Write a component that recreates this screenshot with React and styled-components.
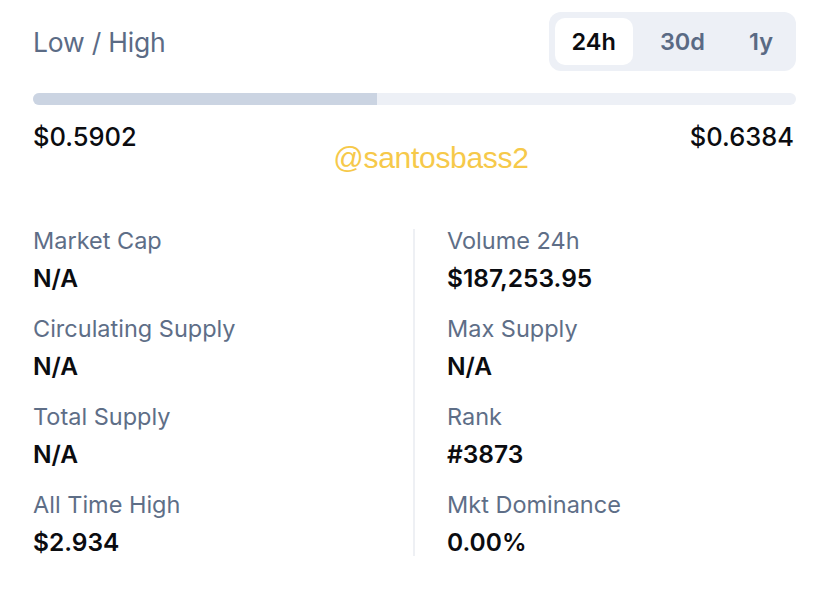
import React from 'react'
import styled, { createGlobalStyle } from 'styled-components'

const GlobalStyle = createGlobalStyle`
  html, body {
    margin: 0;
    padding: 0;
    background: #ffffff;
  }
  body {
    font-family: Inter, "Liberation Sans", sans-serif;
    -webkit-font-smoothing: antialiased;
  }
`

const Page = styled.div`
  position: relative;
  width: 828px;
  height: 599px;
  box-sizing: border-box;
  padding: 12px 32px 0 33px;
  background: #fff;
`

const Header = styled.div`
  display: flex;
  align-items: center;
  justify-content: space-between;
  height: 59px;
`

const Title = styled.div`
  font-size: 26.5px;
  color: #5b6b85;
  font-weight: 400;
  letter-spacing: -0.2px;
`

const Tabs = styled.div`
  display: flex;
  gap: 10px;
  padding: 6px;
  background: #edf0f6;
  border-radius: 12px;
`

const Tab = styled.button`
  border: 0;
  height: 47px;
  padding: 0 17px;
  border-radius: 10px;
  font-family: inherit;
  font-size: 23.5px;
  font-weight: 600;
  background: ${({ active }) => (active ? '#ffffff' : 'transparent')};
  color: ${({ active }) => (active ? '#0b0c10' : '#5a6a84')};
  cursor: pointer;
`

const Track = styled.div`
  margin-top: 22px;
  height: 12px;
  border-radius: 6px;
  background: #edf0f6;
  overflow: hidden;
`

const Fill = styled.div`
  height: 100%;
  background: #cbd4e2;
`

const PriceRow = styled.div`
  display: flex;
  justify-content: space-between;
  margin-top: 17px;
  padding-right: 2px;
  font-size: 25.5px;
  line-height: 30px;
  font-weight: 500;
  color: #0b0c10;
`

const Watermark = styled.div`
  position: absolute;
  left: 0;
  right: 0;
  top: 141px;
  padding-left: 34px;
  text-align: center;
  font-family: "Liberation Sans", Arial, sans-serif;
  font-size: 30px;
  color: #f6c94a;
  letter-spacing: -0.3px;
`

const Stats = styled.div`
  display: grid;
  grid-template-columns: 380px 1fr;
  margin-top: 77px;
`

const Column = styled.div`
  display: flex;
  flex-direction: column;
  gap: 25px;
  padding-left: ${({ divided }) => (divided ? '32px' : '0')};
  border-left: ${({ divided }) => (divided ? '2px solid #eef0f4' : 'none')};
`

const Stat = styled.div`
  display: flex;
  flex-direction: column;
  gap: 11px;
`

const Label = styled.div`
  font-size: 23.5px;
  line-height: 24px;
  color: #5e6e87;
`

const Value = styled.div`
  font-size: 24.5px;
  line-height: 28px;
  font-weight: 600;
  color: #0b0c10;
`

const left = [
  ['Market Cap', 'N/A'],
  ['Circulating Supply', 'N/A'],
  ['Total Supply', 'N/A'],
  ['All Time High', '$2.934'],
]

const right = [
  ['Volume 24h', '$187,253.95'],
  ['Max Supply', 'N/A'],
  ['Rank', '#3873'],
  ['Mkt Dominance', '0.00%'],
]

export default function App() {
  const low = 0.5902
  const high = 0.6384
  const pct = 45.1
  return (
    <>
      <GlobalStyle />
      <Page>
        <Header>
          <Title>Low / High</Title>
          <Tabs>
            <Tab active>24h</Tab>
            <Tab>30d</Tab>
            <Tab>1y</Tab>
          </Tabs>
        </Header>
        <Track>
          <Fill style={{ width: `${pct}%` }} />
        </Track>
        <PriceRow>
          <span>${low.toFixed(4)}</span>
          <span>${high.toFixed(4)}</span>
        </PriceRow>
        <Watermark>@santosbass2</Watermark>
        <Stats>
          <Column>
            {left.map(([l, v]) => (
              <Stat key={l}>
                <Label>{l}</Label>
                <Value>{v}</Value>
              </Stat>
            ))}
          </Column>
          <Column divided>
            {right.map(([l, v]) => (
              <Stat key={l}>
                <Label>{l}</Label>
                <Value>{v}</Value>
              </Stat>
            ))}
          </Column>
        </Stats>
      </Page>
    </>
  )
}
